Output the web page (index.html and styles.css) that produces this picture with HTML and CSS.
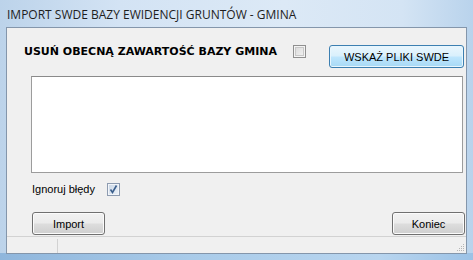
FILE: index.html
```html
<!DOCTYPE html>
<html lang="pl">
<head>
<meta charset="utf-8">
<title>Import SWDE</title>
<link rel="stylesheet" href="styles.css">
</head>
<body>
<div class="window">
  <div class="titlebar"><span class="title">IMPORT SWDE BAZY EWIDENCJI GRUNTÓW - GMINA</span></div>
  <div class="client">
    <div class="row-top">
      <span class="big-label">USUŃ OBECNĄ ZAWARTOŚĆ BAZY GMINA</span>
      <span class="check"></span>
      <button class="btn btn-default">WSKAŻ PLIKI SWDE</button>
    </div>
    <div class="log"></div>
    <div class="row-ignore">
      <span class="label">Ignoruj błędy</span>
      <span class="check checked"><svg viewBox="0 0 11 11" width="11" height="11"><path d="M2.5 5.5 L4.5 8.5 L8.5 1.5" fill="none" stroke="#3b5f8c" stroke-width="1.6"/></svg></span>
    </div>
    <div class="row-buttons">
      <button class="btn">Import</button>
      <button class="btn">Koniec</button>
    </div>
    <div class="status">
      <span class="status-cell"></span>
      <span class="grip"><svg viewBox="0 0 8 8" width="8" height="8"><g fill="#b5b5b5"><rect x="6" y="0" width="1" height="1"/><rect x="4" y="2" width="1" height="1"/><rect x="6" y="2" width="1" height="1"/><rect x="2" y="4" width="1" height="1"/><rect x="4" y="4" width="1" height="1"/><rect x="6" y="4" width="1" height="1"/><rect x="0" y="6" width="1" height="1"/><rect x="2" y="6" width="1" height="1"/><rect x="4" y="6" width="1" height="1"/><rect x="6" y="6" width="1" height="1"/></g></svg></span>
    </div>
  </div>
</div>
</body>
</html>
```

FILE: styles.css
```css
html, body {
  margin: 0;
  padding: 0;
}
body {
  width: 473px;
  height: 260px;
  overflow: hidden;
  background: #c8dcf0;
}
.window {
  width: 473px;
  height: 260px;
  box-sizing: border-box;
  display: flex;
  flex-direction: column;
  background: linear-gradient(to right, #bcd3ea 0%, #d3e3f4 25%, #dce9f6 60%, #d4e4f4 85%, #b9d3ec 100%);
  position: relative;
}
.window::after {
  content: "";
  position: absolute;
  left: 0;
  right: 0;
  bottom: 0;
  height: 7px;
  background: linear-gradient(to right, #8fb6dc, #a9cbe9 40%, #b8d5ef 80%, #9cc2e6);
}
.titlebar {
  height: 27px;
  box-sizing: border-box;
  padding: 5px 0 0 7px;
}
.title {
  font-family: "Open Sans", "Liberation Sans", sans-serif;
  font-size: 12px;
  line-height: 16px;
  color: #1e1e1e;
}
.client {
  margin-left: 6px;
  width: 461px;
  height: 227px;
  box-sizing: border-box;
  border: 1px solid #8496ab;
  background: #f0f0f0;
  display: flex;
  flex-direction: column;
  font-family: "Liberation Sans", Arial, sans-serif;
  font-size: 11px;
  color: #000;
  position: relative;
  z-index: 1;
}
.row-top {
  display: flex;
  align-items: flex-start;
  margin-top: 17px;
  padding-left: 17px;
  height: 23px;
}
.big-label {
  width: 269px;
  font-family: "DejaVu Sans", Verdana, sans-serif;
  font-weight: bold;
  font-size: 11px;
  line-height: 13px;
  white-space: nowrap;
}
.check {
  width: 13px;
  height: 13px;
  box-sizing: border-box;
  border: 1px solid #8f8f8f;
  background: linear-gradient(135deg, #d8d8d8, #f4f4f4);
  box-shadow: inset 0 0 0 1px #f4f4f4, inset 0 0 0 2px #c8c8c8;
  display: flex;
  align-items: center;
  justify-content: center;
}
.check.checked {
  border-color: #8d9bb0;
  background: linear-gradient(135deg, #c9d6e6, #eef3f9);
  box-shadow: inset 0 0 0 1px #f2f5f9;
}
.check svg {
  display: block;
}
.row-top .check {
  margin-right: 23px;
}
.btn {
  width: 73px;
  height: 23px;
  box-sizing: border-box;
  padding: 0;
  border: 1px solid #707070;
  border-radius: 3px;
  background: linear-gradient(to bottom, #f2f2f2 0%, #ebebeb 48%, #dddddd 52%, #cfcfcf 100%);
  box-shadow: inset 0 0 0 1px #fbfbfb;
  font-family: "Liberation Sans", Arial, sans-serif;
  font-size: 11px;
  color: #000;
  line-height: 20px;
  text-align: center;
}
.btn-default {
  width: 135px;
  border-color: #3c7fb1;
  background: linear-gradient(to bottom, #eaf6fd 0%, #d9f0fc 48%, #bee6fd 52%, #a7d9f5 100%);
  box-shadow: inset 0 0 0 1px #e8f6fd;
}
.log {
  margin: 8px 0 0 24px;
  width: 432px;
  height: 97px;
  box-sizing: border-box;
  background: #fff;
  border: 1px solid #9c9c9c;
  border-top-color: #8a8a8a;
}
.row-ignore {
  display: flex;
  align-items: flex-start;
  margin-top: 10px;
  padding-left: 25px;
  height: 13px;
}
.label {
  width: 75px;
  line-height: 13px;
  white-space: nowrap;
}
.row-buttons {
  display: flex;
  justify-content: space-between;
  margin-top: 16px;
  padding: 0 1px 0 25px;
}
.status {
  margin-top: auto;
  height: 17px;
  box-sizing: border-box;
  border-top: 1px solid #d2d2d2;
  display: flex;
  align-items: stretch;
  justify-content: space-between;
  background: #f0f0f0;
}
.status-cell {
  width: 50px;
  margin-top: 2px;
  border-right: 1px solid #d2d2d2;
}
.grip {
  display: flex;
  align-items: flex-end;
  padding: 0 1px 1px 0;
}
.grip svg {
  display: block;
}
```
